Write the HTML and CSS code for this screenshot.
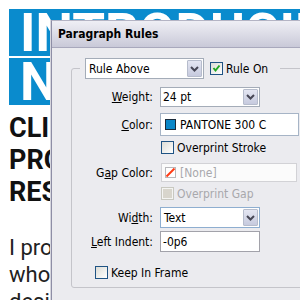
FILE: index.html
```html
<!DOCTYPE html>
<html lang="en">
<head>
<meta charset="utf-8">
<title>Paragraph Rules</title>
<link rel="stylesheet" href="styles.css">
</head>
<body>
<main class="page">
  <h1 class="banner">
    <span class="banner-line">INTRODUCING</span>
    <span class="banner-line">NEW CLIENTS</span>
  </h1>
  <h2 class="headline">CLIENT<br>PROFILE:<br>RESEARCH</h2>
  <p class="intro">I provide design services<br>whole teams and<br>designers</p>
</main>

<section class="dialog" aria-label="Paragraph Rules">
  <header class="titlebar">Paragraph Rules</header>
  <div class="dialog-body">
    <fieldset class="group">
      <legend class="group-legend">
        <span class="legend-inner">
          <span class="select select-rule">
            <span class="select-value">Rule Above</span>
            <span class="select-btn"><svg width="9" height="6" viewBox="0 0 9 6"><path d="M1 1 L4.5 4.5 L8 1" fill="none" stroke="#474756" stroke-width="2"/></svg></span>
          </span>
          <span class="check checked"><svg width="11" height="11" viewBox="0 0 11 11"><path d="M2.5 5 L4.5 7.5 L8.5 2.5" fill="none" stroke="#22a822" stroke-width="2"/></svg></span>
          <span class="check-label">Rule On</span>
        </span>
      </legend>

      <div class="row row-weight">
        <span class="label"><u>W</u>eight:</span>
        <span class="select select-short">
          <span class="select-value tight">24 pt</span>
          <span class="select-btn"><svg width="9" height="6" viewBox="0 0 9 6"><path d="M1 1 L4.5 4.5 L8 1" fill="none" stroke="#474756" stroke-width="2"/></svg></span>
        </span>
      </div>

      <div class="row row-color">
        <span class="label"><u>C</u>olor:</span>
        <span class="field field-color">
          <span class="swatch swatch-blue"></span>
          <span>PANTONE 300 C</span>
        </span>
      </div>

      <div class="row row-stroke">
        <span class="label"></span>
        <span class="check check-offset"></span>
        <span class="check-label">Overprint Stroke</span>
      </div>

      <div class="row row-gap">
        <span class="label">G<u>a</u>p Color:</span>
        <span class="field field-gap">
          <span class="swatch swatch-none"><svg width="11" height="11" viewBox="0 0 11 11"><path d="M1.5 9.5 L9.5 1.5" stroke="#ff3b14" stroke-width="2"/></svg></span>
          <span class="disabled-text">[None]</span>
        </span>
      </div>

      <div class="row row-gapcheck">
        <span class="label"></span>
        <span class="check check-offset check-disabled"><span class="check-fill"></span></span>
        <span class="check-label disabled-text">Overprint Gap</span>
      </div>

      <div class="row row-width">
        <span class="label">Wi<u>d</u>th:</span>
        <span class="select select-short select-focus">
          <span class="select-value">Text</span>
          <span class="select-btn"><svg width="9" height="6" viewBox="0 0 9 6"><path d="M1 1 L4.5 4.5 L8 1" fill="none" stroke="#474756" stroke-width="2"/></svg></span>
        </span>
      </div>

      <div class="row row-indent">
        <span class="label"><u>L</u>eft Indent:</span>
        <span class="field field-indent">-0p6</span>
      </div>

      <div class="row row-keep">
        <span class="check check-keep"></span>
        <span class="check-label">Keep In Frame</span>
      </div>
    </fieldset>
  </div>
</section>
</body>
</html>
```

FILE: styles.css
```css
html, body {
  margin: 0;
  padding: 0;
  overflow: hidden;
  width: 300px;
  height: 300px;
  background: #ffffff;
}

.page {
  padding: 9px 0 0 9px;
  font-family: Roboto, "Liberation Sans", sans-serif;
}

.banner {
  margin: 0;
  font-family: Roboto, sans-serif;
  font-weight: 700;
  font-size: 53px;
  color: #ffffff;
  white-space: nowrap;
}

.banner-line {
  display: block;
  height: 47px;
  line-height: 47px;
  padding: 1px 0 0 11px;
  box-sizing: border-box;
  background: #0a8bcd;
  overflow: hidden;
}

.banner-line + .banner-line {
  margin-top: 2px;
}

.headline {
  margin: 7px 0 0 0;
  font-weight: 700;
  font-size: 27px;
  line-height: 32px;
  color: #111111;
  white-space: nowrap;
}

.intro {
  margin: 26px 0 0 0;
  font-weight: 400;
  font-size: 22px;
  line-height: 27px;
  color: #222222;
  white-space: nowrap;
}

/* Dialog */
.dialog {
  position: absolute;
  left: 51px;
  top: 20px;
  width: 270px;
  height: 300px;
  border-top: 1px solid #b4b4c4;
  border-left: 1px solid #8e8ea6;
  box-shadow: -1px 0 0 #d6d6de;
  background: #ebebef;
  font-family: "DejaVu Sans Condensed", "DejaVu Sans", sans-serif;
  font-stretch: condensed;
  font-size: 12px;
  color: #000000;
}

.titlebar {
  height: 26px;
  line-height: 27px;
  padding-left: 6px;
  background: linear-gradient(#efeff5, #c9c9d8);
  border-bottom: 1px solid #a8a8bc;
  font-weight: bold;
  font-size: 12px;
  white-space: nowrap;
}

.dialog-body {
  padding: 10px 0 0 19px;
}

.group {
  margin: 0;
  width: 260px;
  border: 1px solid #c4c4ca;
  border-radius: 3px;
  padding: 0 0 8px 8px;
  box-sizing: border-box;
}

.group-legend {
  padding: 0 12px 0 5px;
}

.legend-inner {
  display: flex;
  align-items: center;
  height: 21px;
}

.select {
  display: flex;
  align-items: stretch;
  box-sizing: border-box;
  background: #ffffff;
  border: 1px solid #a4acb8;
}

.select-rule {
  width: 119px;
  height: 21px;
}

.select-short {
  width: 100px;
  height: 20px;
}

.select-focus {
  height: 21px;
  border-color: #8eaed0;
}

.select-value {
  flex: 1;
  display: flex;
  align-items: center;
  padding-left: 3px;
  white-space: nowrap;
}

.select-value.tight {
  padding-left: 2px;
}

.select-btn {
  width: 15px;
  margin: 1px 1px 1px 0;
  display: flex;
  align-items: center;
  justify-content: center;
  background: linear-gradient(#e4e6f2, #c6cade);
  border: 1px solid #b6bccc;
  border-radius: 1px;
  box-sizing: border-box;
}

.check {
  width: 13px;
  height: 13px;
  box-sizing: border-box;
  border: 1px solid #1f5384;
  background: linear-gradient(135deg, #dcdcd6, #ffffff);
  display: flex;
  align-items: center;
  justify-content: center;
  flex: none;
}

.legend-inner .check {
  margin-left: 6px;
}

.check-label {
  margin-left: 3px;
  white-space: nowrap;
}

.check-offset {
  margin-left: 1px;
}

.check-disabled {
  border-color: #c8c8c0;
  background: #f4f4f2;
}

.check-fill {
  width: 9px;
  height: 9px;
  background: #d8d5cc;
}

.check-keep {
  margin-left: 15px;
}

.disabled-text {
  color: #a8a8ac;
}

.row {
  display: flex;
  align-items: center;
}

.label {
  width: 73px;
  margin-right: 7px;
  text-align: right;
  white-space: nowrap;
  flex: none;
}

.row-weight { margin-top: 8px; height: 20px; }
.row-color { margin-top: 6px; height: 23px; }
.row-stroke { margin-top: 5px; height: 13px; }
.row-gap { margin-top: 9px; height: 19px; }
.row-gapcheck { margin-top: 5px; height: 13px; }
.row-width { margin-top: 7px; height: 21px; }
.row-indent { margin-top: 3px; height: 21px; }
.row-keep { margin-top: 14px; height: 13px; }

.field {
  display: flex;
  align-items: center;
  box-sizing: border-box;
  background: #ffffff;
  white-space: nowrap;
}

.field-color {
  width: 139px;
  height: 23px;
  border: 1px solid #a6b4c6;
  padding-left: 4px;
  gap: 4px;
}

.field-gap {
  margin-left: 1px;
  width: 136px;
  height: 19px;
  border: 1px solid #d2d2d6;
  background: #fbfbfb;
  padding-left: 3px;
  gap: 4px;
}

.field-indent {
  width: 100px;
  height: 21px;
  border: 1px solid #a2a2aa;
  padding-left: 2px;
}

.swatch {
  width: 11px;
  height: 11px;
  box-sizing: border-box;
  flex: none;
}

.swatch-blue {
  background: #0a87c8;
  border: 1px solid #1a2a3a;
}

.swatch-none {
  background: #ffffff;
  border: 1px solid #b8b8bc;
  display: flex;
}

.swatch-none svg {
  margin: -1px;
}
```
